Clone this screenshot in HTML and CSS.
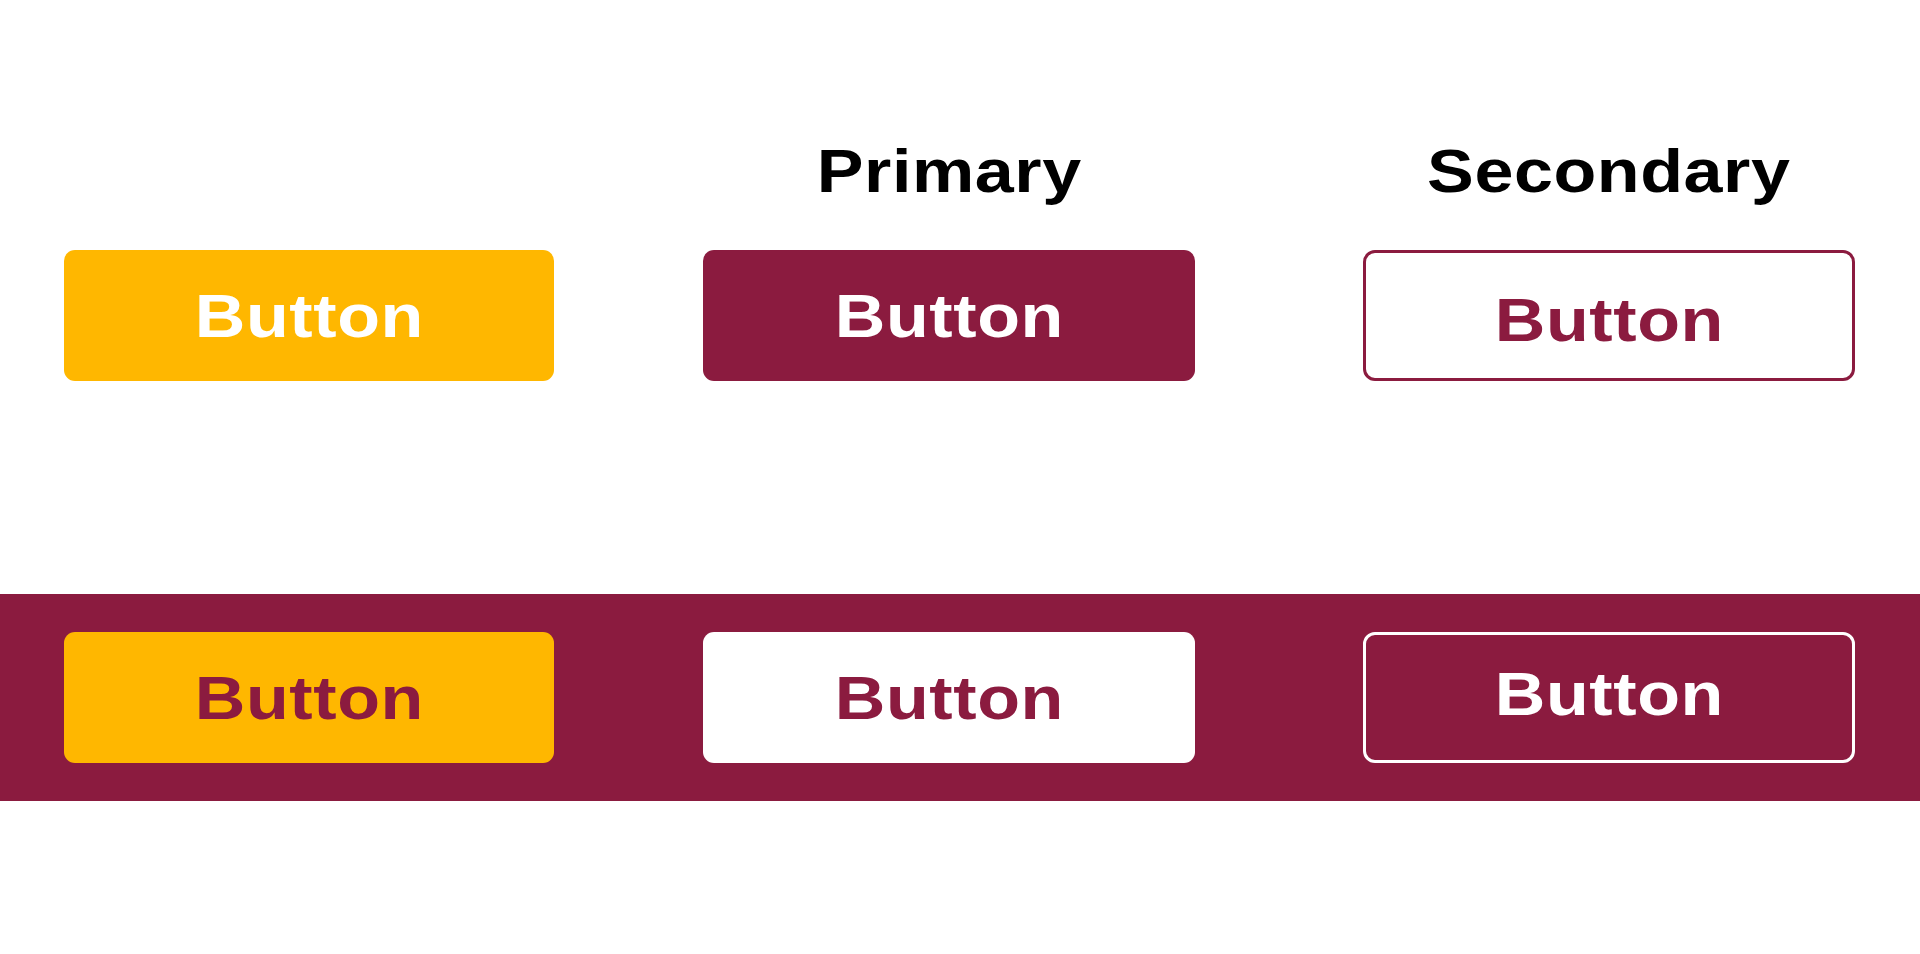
FILE: index.html
```html
<!DOCTYPE html>
<html lang="en">
<head>
<meta charset="utf-8">
<title>Buttons</title>
<link rel="stylesheet" href="styles.css">
</head>
<body>
  <section class="light">
    <div class="grid">
      <div class="title"></div>
      <h2 class="title"><span class="label">Primary</span></h2>
      <h2 class="title col3"><span class="label">Secondary</span></h2>
      <button class="btn btn-accent"><span class="label">Button</span></button>
      <button class="btn btn-primary"><span class="label">Button</span></button>
      <button class="btn btn-outline col3"><span class="label">Button</span></button>
    </div>
  </section>
  <section class="band">
    <div class="grid">
      <button class="btn btn-accent-on-dark"><span class="label">Button</span></button>
      <button class="btn btn-white"><span class="label">Button</span></button>
      <button class="btn btn-outline-white col3"><span class="label">Button</span></button>
    </div>
  </section>
</body>
</html>
```

FILE: styles.css
```css
* { box-sizing: border-box; }

html, body {
  margin: 0;
  padding: 0;
  background: #ffffff;
  font-family: "Liberation Sans", Arial, Helvetica, sans-serif;
}

body {
  width: 1920px;
  height: 954px;
  overflow: hidden;
}

.grid {
  display: grid;
  grid-template-columns: 490px 492px 511px;
  column-gap: 149px;
  padding-left: 64px;
}

.col3 {
  justify-self: end;
  width: 492px;
}

.light {
  padding-top: 140px;
}

.light .grid {
  row-gap: 48px;
}

.label {
  display: inline-block;
  transform: scaleX(1.13);
  transform-origin: center;
  letter-spacing: 0.5px;
}

.title {
  margin: 0;
  height: 62px;
  font-size: 62px;
  line-height: 62px;
  font-weight: 700;
  color: #000000;
  text-align: center;
}

.btn {
  display: flex;
  align-items: center;
  justify-content: center;
  height: 131px;
  margin: 0;
  padding: 0;
  border: none;
  border-radius: 11px;
  font-family: "Liberation Sans", Arial, Helvetica, sans-serif;
  font-size: 62px;
  line-height: 62px;
  font-weight: 700;
  cursor: pointer;
}

.btn-accent {
  background: #ffb700;
  color: #ffffff;
}

.btn-primary {
  background: #8b1b3f;
  color: #ffffff;
}

.btn-outline {
  background: #ffffff;
  color: #8b1b3f;
  border: 3px solid #8b1b3f;
  border-radius: 12px;
  padding-top: 8px;
}

.band {
  margin-top: 213px;
  height: 207px;
  padding-top: 38px;
  background: #8b1b3f;
}

.btn-accent-on-dark {
  background: #ffb700;
  color: #8b1b3f;
}

.btn-white {
  background: #ffffff;
  color: #8b1b3f;
}

.btn-outline-white {
  background: #8b1b3f;
  color: #ffffff;
  border: 3px solid #ffffff;
  border-radius: 12px;
  padding-bottom: 8px;
}
```
